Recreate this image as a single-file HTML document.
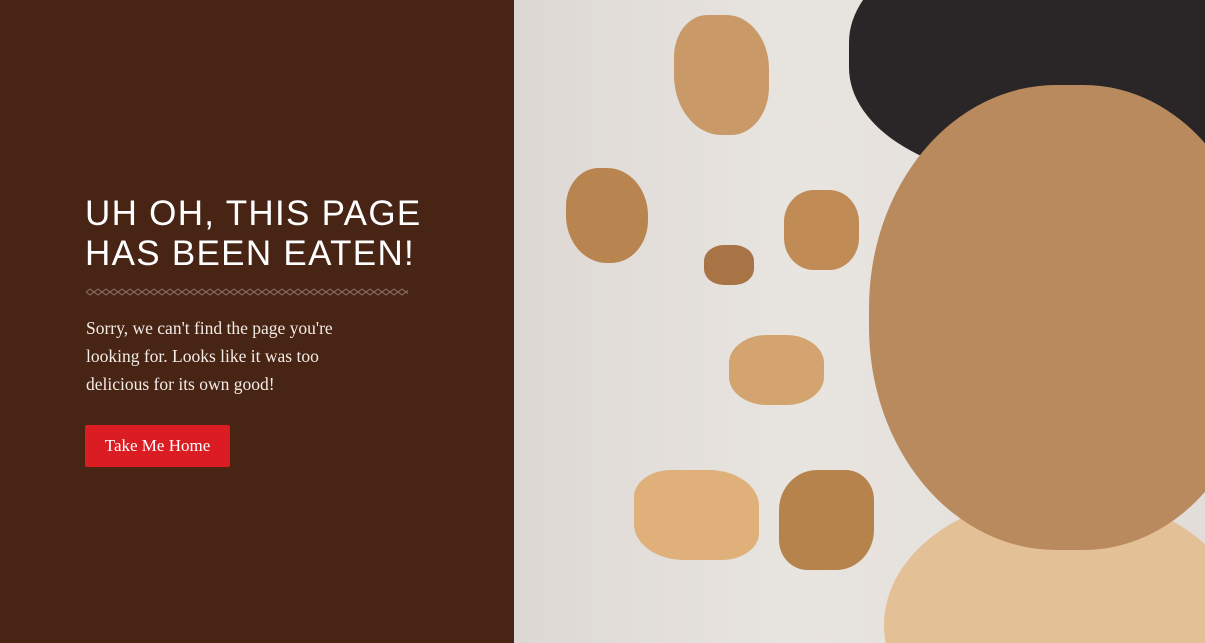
<!DOCTYPE html>
<html><head><style>
html,body{margin:0;width:1205px;height:643px;overflow:hidden}
body{position:relative;background:#482415;font-family:"Liberation Sans",sans-serif}
.left{position:absolute;left:0;top:0;width:514px;height:643px;background:#482415}
h1{position:absolute;left:85px;top:194px;margin:0;color:#fff;font-weight:normal;font-size:35px;line-height:40px;letter-spacing:1.3px}
.div{position:absolute;left:86px;top:288px;width:322px;height:8px}
p{position:absolute;left:86px;top:314px;margin:0;color:#f3ece6;font-family:"Liberation Serif",serif;font-size:17.5px;line-height:28px;width:292px}
.btn{position:absolute;left:85px;top:425px;width:145px;height:42px;background:#dc1c23;border-radius:2px;color:#fff;font-family:"Liberation Serif",serif;font-size:17px;line-height:42px;text-align:center}
.right{position:absolute;left:514px;top:0;width:691px;height:643px;background:linear-gradient(90deg,#ddd8d3,#e8e4e0 40%,#e2ddd8);overflow:hidden}
.c{position:absolute}
</style></head><body>
<div class="left"></div>
<h1>UH OH, THIS PAGE<br>HAS BEEN EATEN!</h1>
<svg class="div" viewBox="0 0 322 8"><defs><pattern id="d" width="8" height="8" patternUnits="userSpaceOnUse"><path d="M0 4L4 1L8 4L4 7Z" fill="none" stroke="#8d7266" stroke-width="1"/></pattern></defs><rect width="322" height="8" fill="url(#d)"/></svg>
<p>Sorry, we can't find the page you're looking for. Looks like it was too delicious for its own good!</p>
<div class="btn">Take Me Home</div>
<div class="right">
<div class="c" style="left:335px;top:-70px;width:420px;height:250px;background:#2a2526;border-radius:45%"></div>
<div class="c" style="left:370px;top:495px;width:360px;height:260px;background:#e4c096;border-radius:50%"></div>
<div class="c" style="left:355px;top:85px;width:390px;height:465px;background:#b98a5e;border-radius:48% 45% 45% 48%"></div>
<div class="c" style="left:160px;top:15px;width:95px;height:120px;background:#c99a68;border-radius:35% 45% 40% 50%"></div>
<div class="c" style="left:52px;top:168px;width:82px;height:95px;background:#b88550;border-radius:40% 50% 45% 50%"></div>
<div class="c" style="left:270px;top:190px;width:75px;height:80px;background:#c08b55;border-radius:40%"></div>
<div class="c" style="left:190px;top:245px;width:50px;height:40px;background:#a87445;border-radius:40%"></div>
<div class="c" style="left:215px;top:335px;width:95px;height:70px;background:#d3a46f;border-radius:40%"></div>
<div class="c" style="left:120px;top:470px;width:125px;height:90px;background:#dfb07a;border-radius:30% 40%"></div>
<div class="c" style="left:265px;top:470px;width:95px;height:100px;background:#b7834c;border-radius:40% 30%"></div>
</div>
</body></html>
